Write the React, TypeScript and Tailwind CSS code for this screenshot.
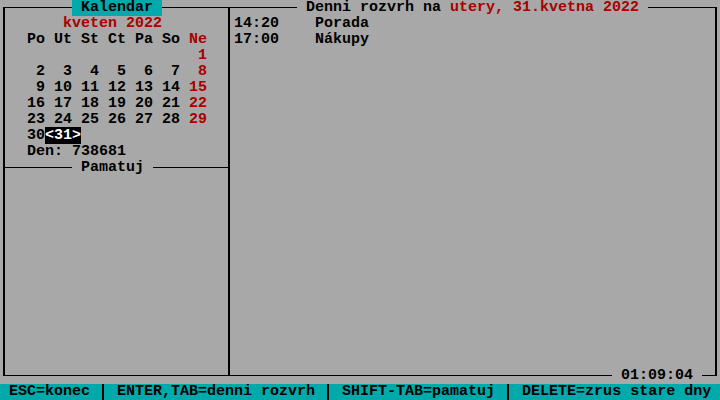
const RED = 'text-[#aa0000]';

const weeks: (number | null)[][] = [
  [null, null, null, null, null, null, 1],
  [2, 3, 4, 5, 6, 7, 8],
  [9, 10, 11, 12, 13, 14, 15],
  [16, 17, 18, 19, 20, 21, 22],
  [23, 24, 25, 26, 27, 28, 29],
];

const agenda = [
  { time: '14:20', text: 'Porada' },
  { time: '17:00', text: 'Nákupy' },
];

function Sep() {
  return (
    <span className="inline-block w-[9px] h-4 align-top pl-[3px]">
      <span className="block w-[2px] h-4 bg-black" />
    </span>
  );
}

export default function App() {
  return (
    <div className="w-[720px] h-[400px] bg-[#a8a8a8] text-black font-bold text-[15px] leading-4 whitespace-pre overflow-hidden [font-family:'Liberation_Mono','DejaVu_Sans_Mono',monospace]">
      <div className="h-[384px] pt-[7px] pl-[3px]">
        <div className="relative flex w-[714px] h-[369px] border-x-2 border-y border-black">
          {/* kalendar */}
          <div className="w-[225px] flex flex-col border-r-2 border-black">
            <div className="absolute left-[67px] -top-2 h-4 bg-[#00aaaa]"> Kalendar </div>
            <div className="relative h-[160px] border-b border-black pt-2 pl-1">
              <div className={RED}>{'      kveten 2022'}</div>
              <div>
                {'  Po Ut St Ct Pa So '}
                <span className={RED}>Ne</span>
              </div>
              {weeks.map((w, r) => (
                <div key={r} className="h-4">
                  {'  '}
                  {w.map((d, i) => (
                    <span key={i} className={i === 6 ? RED : ''}>
                      {(i ? ' ' : '') + (d ? String(d).padStart(2, ' ') : '  ')}
                    </span>
                  ))}
                </div>
              ))}
              <div>
                {'  30'}
                <span className="bg-black text-white">{'<31>'}</span>
              </div>
              <div>{'  Den: 738681'}</div>
              <div className="absolute left-[67px] top-[152px] h-4 bg-[#a8a8a8]"> Pamatuj </div>
            </div>
            <div className="flex-1" />
          </div>

          {/* denni rozvrh */}
          <div className="relative flex-1 pt-2 pl-1">
            <div className="absolute left-[67px] -top-2 h-4 bg-[#a8a8a8]">
              {' Denni rozvrh na '}
              <span className={RED}>utery, 31.kvetna 2022</span>{' '}
            </div>
            {agenda.map((a) => (
              <div key={a.time}>{a.time + '    ' + a.text}</div>
            ))}
            <div className="absolute left-[382px] top-[360px] h-4 bg-[#a8a8a8]"> 01:09:04 </div>
          </div>
        </div>
      </div>

      <div className="h-4 bg-[#00aaaa]">
        {' ESC=konec '}
        <Sep />
        {' ENTER,TAB=denni rozvrh '}
        <Sep />
        {' SHIFT-TAB=pamatuj '}
        <Sep />
        {' DELETE=zrus stare dny'}
      </div>
    </div>
  );
}
